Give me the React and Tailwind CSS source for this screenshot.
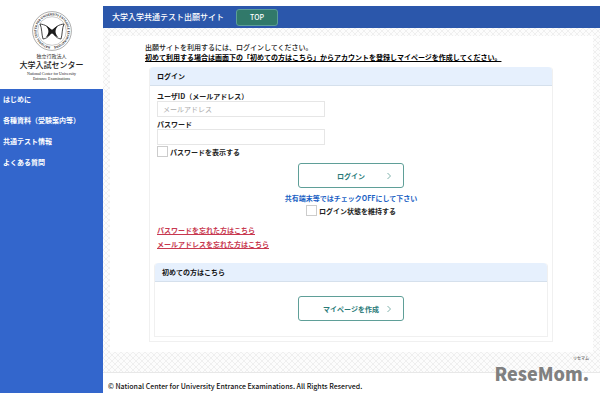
import React from "react";

const navItems = ["はじめに", "各種資料（受験案内等）", "共通テスト情報", "よくある質問"];

function Emblem() {
  return (
    <svg viewBox="0 0 40 40" className="h-10 w-10" role="img" aria-label="大学入試センター">
      <defs>
        <path id="ring" d="M20 35.5 A15.5 15.5 0 1 1 20.1 35.5" />
      </defs>
      <circle cx="20" cy="20" r="19.4" fill="#fff" stroke="#777" strokeWidth="0.6" />
      <text fontSize="3" fontWeight="700" fill="#333" textAnchor="middle">
        <textPath href="#ring" startOffset="50%">
          NATIONAL CENTER FOR UNIVERSITY ENTRANCE EXAMINATIONS
        </textPath>
      </text>
      <circle cx="20" cy="20" r="14.3" fill="none" stroke="#999" strokeWidth="0.5" />
      <path
        d="M8 13 C13 13.5 17 16 18.5 19 M8 13 C10 17 9.5 23 11 28 C14 27.5 17 26 18.5 22 M32 13 C27 13.5 23 16 21.5 19 M32 13 C30 17 30.5 23 29 28 C26 27.5 23 26 21.5 22"
        fill="none"
        stroke="#333"
        strokeWidth="0.9"
      />
      <path
        d="M14 15 C18 16.5 18.5 18.5 20 18.5 C21.5 18.5 22 16.5 26 15 C23 18 22.5 22 26 26 C22.5 25.5 21.5 22.5 20 22.5 C18.5 22.5 17.5 25.5 14 26 C17.5 22 17 18 14 15 Z"
        fill="#1c1c1c"
      />
    </svg>
  );
}

function Hatch() {
  return (
    <svg className="absolute inset-0 h-full w-full" aria-hidden="true">
      <defs>
        <pattern id="hatch" width="6" height="6" patternUnits="userSpaceOnUse">
          <path d="M0 0 L6 6 M6 0 L0 6" stroke="#e9e9e9" strokeWidth="0.7" fill="none" />
        </pattern>
      </defs>
      <rect width="100%" height="100%" fill="#fcfcfc" />
      <rect width="100%" height="100%" fill="url(#hatch)" />
    </svg>
  );
}

function OutlineButton({ children }) {
  return (
    <button
      type="button"
      className="grid h-[25px] w-[106px] grid-cols-[1fr_auto_1fr] items-center rounded-[3px] border border-[#5f9f98] bg-white font-bold text-[#2a7a78]"
    >
      <span />
      <span>{children}</span>
      <svg viewBox="0 0 4 8" className="mr-3 h-2 w-1 justify-self-end" aria-hidden="true">
        <path d="M0.5 1 L3.5 4 L0.5 7" fill="none" stroke="#5f9f98" strokeWidth="0.8" />
      </svg>
    </button>
  );
}

function SectionTitle({ children }) {
  return (
    <h2 className="flex h-[19px] items-center rounded-t-sm border-b border-[#d5e0ec] bg-[#e6f0fd] px-[7px] text-[7px] font-bold text-[#111]">
      {children}
    </h2>
  );
}

function Check({ children }) {
  return (
    <label className="flex items-center gap-[2px]">
      <input type="checkbox" className="h-[11px] w-[11px] appearance-none border border-[#ccc] bg-white" />
      {children}
    </label>
  );
}

export default function App() {
  return (
    <div className="relative flex min-h-screen bg-white pt-[6px] pb-[7px] font-['Noto_Sans_CJK_JP',sans-serif] text-[7px] leading-[10px] text-[#222]">
      <aside className="flex w-[103px] shrink-0 flex-col">
        <div className="flex h-[83px] flex-col items-center pt-[5px]">
          <Emblem />
          <p className="mt-px text-[5px] leading-[7px]">独立行政法人</p>
          <p className="text-[8px] leading-[12px] font-medium">大学入試センター</p>
          <p className="text-center font-['Liberation_Serif',serif] text-[4px] leading-[5px]">
            National Center for University
            <br />
            Entrance Examinations
          </p>
        </div>
        <nav className="grow bg-[#3366cc] px-[3px] pt-[5px] font-bold text-white">
          <ul className="flex flex-col gap-[11px]">
            {navItems.map((item) => (
              <li key={item}>
                <a href="#" className="block">{item}</a>
              </li>
            ))}
          </ul>
        </nav>
      </aside>

      <div className="flex min-w-0 grow flex-col">
        <header className="flex h-[22px] items-center gap-3 bg-[#2b57ab] pl-[9px] text-white">
          <h1 className="text-[8px] font-medium">大学入学共通テスト出願サイト</h1>
          <button
            type="button"
            className="h-[17px] w-[42px] rounded-[3px] border border-[#5c9e97] bg-[#31796a] font-medium"
          >
            TOP
          </button>
        </header>

        <main className="relative grow px-[7px] pt-2 pb-5">
          <Hatch />
          <div className="relative h-full bg-white pt-[6px] pr-10 pb-[10px] pl-[35px]">
            <p className="font-medium whitespace-nowrap">出願サイトを利用するには、ログインしてください。</p>
            <p className="font-bold whitespace-nowrap text-black underline">
              初めて利用する場合は画面下の「初めての方はこちら」からアカウントを登録しマイページを作成してください。
            </p>

            <section className="mt-[5px] ml-1 rounded-t-sm border border-t-0 border-[#f0f0f0]">
              <SectionTitle>ログイン</SectionTitle>
              <form className="px-[7px] pt-[5px] font-bold" onSubmit={(e) => e.preventDefault()}>
                <label htmlFor="user" className="block">ユーザID（メールアドレス）</label>
                <input
                  id="user"
                  type="text"
                  placeholder="メールアドレス"
                  className="block h-4 w-[168px] border border-[#e6e6e6] px-[5px] font-normal placeholder:text-[#aaa]"
                />
                <label htmlFor="pass" className="mt-[2px] block">パスワード</label>
                <input id="pass" type="password" className="block h-4 w-[168px] border border-[#e6e6e6] px-[5px]" />
                <div className="mt-px">
                  <Check>パスワードを表示する</Check>
                </div>
                <div className="mt-[6px] flex flex-col items-center">
                  <OutlineButton>ログイン</OutlineButton>
                  <p className="mt-[5px] mb-[2px] text-[#1a5fc4]">共有端末等ではチェックOFFにして下さい</p>
                  <Check>ログイン状態を維持する</Check>
                </div>
                <div className="mt-[9px] flex flex-col items-start gap-1 text-[#c8384f] underline">
                  <a href="#">パスワードを忘れた方はこちら</a>
                  <a href="#">メールアドレスを忘れた方はこちら</a>
                </div>
              </form>

              <section className="mx-1 mt-[14px] mb-1 rounded-t-sm border border-t-0 border-[#f0f0f0]">
                <SectionTitle>初めての方はこちら</SectionTitle>
                <div className="flex justify-center pt-[14px] pb-[15px]">
                  <OutlineButton>マイページを作成</OutlineButton>
                </div>
              </section>
            </section>
          </div>
        </main>

        <footer className="flex h-[21px] items-center border-t border-[#e8e8e8] bg-white pt-[5px] pl-[5px] font-medium text-[#111]">
          © National Center for University Entrance Examinations. All Rights Reserved.
        </footer>
      </div>

      <div className="absolute right-[11px] bottom-[15px] flex flex-col items-end font-black text-[#808080]">
        <span className="text-[4px] leading-[5px] font-bold">リセマム</span>
        <span className="text-[18px] leading-[24px]">ReseMom.</span>
      </div>
    </div>
  );
}
